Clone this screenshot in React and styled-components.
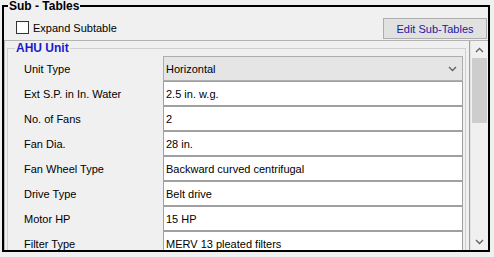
import React from 'react';
import styled, { createGlobalStyle } from 'styled-components';

const GlobalStyle = createGlobalStyle`
  body {
    margin: 0;
    background: #f0f0f0;
    font-family: "Liberation Sans", Arial, sans-serif;
    font-size: 11px;
    color: #000;
  }
`;

const rows = [
  { label: 'Ext S.P. in In. Water', value: '2.5 in. w.g.' },
  { label: 'No. of Fans', value: '2' },
  { label: 'Fan Dia.', value: '28 in.' },
  { label: 'Fan Wheel Type', value: 'Backward curved centrifugal' },
  { label: 'Drive Type', value: 'Belt drive' },
  { label: 'Motor HP', value: '15 HP' },
  { label: 'Filter Type', value: 'MERV 13 pleated filters' },
];

const Chevron = ({ up }) => (
  <svg width="9" height="6" viewBox="0 0 9 6">
    <polyline
      points={up ? '1,5 4.5,1.5 8,5' : '1,1 4.5,4.5 8,1'}
      fill="none"
      stroke="#606060"
      strokeWidth="1.3"
    />
  </svg>
);

const App = () => {
  return (
    <>
      <GlobalStyle />
      <Frame>
        <Title>Sub - Tables</Title>
        <Body>
          {/* checkbox + button */}
          <Toolbar>
            <CheckLabel>
              <CheckBox />
              Expand Subtable
            </CheckLabel>
            <EditButton>Edit Sub-Tables</EditButton>
          </Toolbar>

          {/* scrollable property panel */}
          <Panel>
            <ScrollArea>
              <Group>
                <GroupTitle>AHU Unit</GroupTitle>
                <Grid>
                  <Label>Unit Type</Label>
                  <Combo>
                    Horizontal
                    <Chevron />
                  </Combo>
                  {rows.map((r) => (
                    <React.Fragment key={r.label}>
                      <Label>{r.label}</Label>
                      <Field>{r.value}</Field>
                    </React.Fragment>
                  ))}
                </Grid>
              </Group>
            </ScrollArea>
            <ScrollBar>
              <ArrowBox><Chevron up /></ArrowBox>
              <Track>
                <Thumb />
              </Track>
              <ArrowBox><Chevron /></ArrowBox>
            </ScrollBar>
          </Panel>
        </Body>
      </Frame>
    </>
  );
};

export default App;

const Frame = styled.fieldset`
  box-sizing: border-box;
  margin: 0 0 0 2px;
  padding: 0;
  width: 488px;
  height: 252px;
  min-width: 0;
  border: 2px solid #000;
`;

const Title = styled.legend`
  margin-left: 4px;
  padding: 0 1px;
  font-weight: bold;
  font-size: 12px;
  line-height: 12px;
`;

const Body = styled.div`
  display: flex;
  flex-direction: column;
  height: 238px;
`;

const Toolbar = styled.div`
  box-sizing: border-box;
  display: flex;
  align-items: center;
  justify-content: space-between;
  height: 28px;
  padding: 5px 1px 0 12px;
`;

const CheckLabel = styled.label`
  display: flex;
  align-items: center;
  gap: 4px;
  margin-top: -2px;
`;

const CheckBox = styled.span`
  box-sizing: border-box;
  width: 13px;
  height: 13px;
  background: #fff;
  border: 1px solid #333;
`;

const EditButton = styled.div`
  box-sizing: border-box;
  width: 104px;
  height: 21px;
  display: flex;
  align-items: center;
  justify-content: center;
  background: #e1e1e1;
  border: 1px solid #adadad;
  color: #1a1aa0;
`;

const Panel = styled.div`
  flex: 1;
  display: flex;
  min-height: 0;
  border-top: 1px solid #b4b4b4;
  border-left: 1px solid #b4b4b4;
`;

const ScrollArea = styled.div`
  flex: 1;
  overflow: hidden;
  padding: 1px 0 0 2px;
  border-right: 1px solid #a0a0a0;
`;

const Group = styled.fieldset`
  box-sizing: border-box;
  margin: 0;
  padding: 0;
  width: 459px;
  min-width: 0;
  border: 1px solid #d0d0d0;
`;

const GroupTitle = styled.legend`
  margin-left: 7px;
  padding: 0 1px;
  font-weight: bold;
  font-size: 12px;
  line-height: 13px;
  color: #1a1acd;
`;

const Grid = styled.div`
  display: grid;
  grid-template-columns: 155px 300px;
  grid-auto-rows: 25px;
  padding-top: 1px;
`;

const Label = styled.div`
  display: flex;
  align-items: center;
  padding-left: 16px;
`;

const Field = styled.div`
  box-sizing: border-box;
  display: flex;
  align-items: center;
  padding-left: 2px;
  background: #fff;
  border: 1px solid #a0a0a0;
`;

const Combo = styled(Field)`
  justify-content: space-between;
  padding-right: 5px;
  background: #e5e5e5;
  border-color: #adadad;
`;

const ScrollBar = styled.div`
  width: 17px;
  display: flex;
  flex-direction: column;
  background: #f0f0f0;
  border-left: 1px solid #e3e3e3;
`;

const ArrowBox = styled.div`
  height: 17px;
  display: flex;
  align-items: center;
  justify-content: center;
`;

const Track = styled.div`
  flex: 1;
  padding: 0 1px;
`;

const Thumb = styled.div`
  height: 65px;
  background: #cdcdcd;
`;
